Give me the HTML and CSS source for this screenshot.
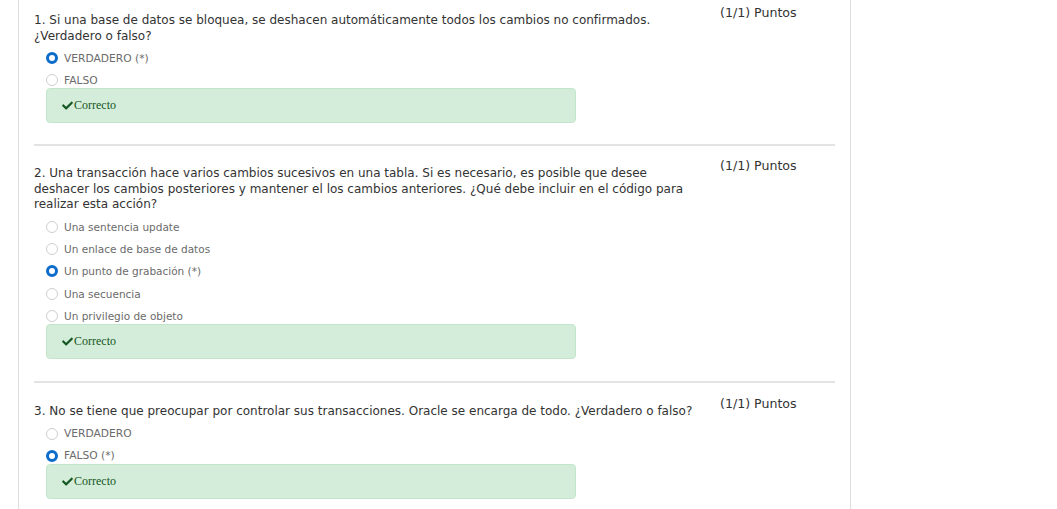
FILE: index.html
```html
<!DOCTYPE html>
<html lang="es">
<head>
<meta charset="utf-8">
<title>Quiz</title>
<link rel="stylesheet" href="styles.css">
</head>
<body>
<div class="quiz">
  <div class="question">
    <div class="q-body">
      <div class="q-text">1. Si una base de datos se bloquea, se deshacen automáticamente todos los cambios no confirmados. ¿Verdadero o falso?</div>
      <ul class="options">
        <li class="opt"><span class="radio checked"></span><span class="caps">VERDADERO (*)</span></li>
        <li class="opt"><span class="radio"></span><span class="caps">FALSO</span></li>
      </ul>
      <div class="feedback"><svg class="check" viewBox="0 40 512 420" width="11" height="9"><path d="M173.9 439.4l-166.4-166.4c-10-10-10-26.2 0-36.2l36.2-36.2c10-10 26.2-10 36.2 0L192 312.7 432.1 72.6c10-10 26.2-10 36.2 0l36.2 36.2c10 10 10 26.2 0 36.2l-294.4 294.4c-10 10-26.2 10-36.2 0z" fill="#155724"/></svg>Correcto</div>
    </div>
    <div class="points">(1/1) Puntos</div>
  </div>
  <div class="sep"></div>
  <div class="question">
    <div class="q-body">
      <div class="q-text">2. Una transacción hace varios cambios sucesivos en una tabla. Si es necesario, es posible que desee deshacer los cambios posteriores y mantener el los cambios anteriores. ¿Qué debe incluir en el código para realizar esta acción?</div>
      <ul class="options">
        <li class="opt"><span class="radio"></span><span>Una sentencia update</span></li>
        <li class="opt"><span class="radio"></span><span>Un enlace de base de datos</span></li>
        <li class="opt"><span class="radio checked"></span><span>Un punto de grabación (*)</span></li>
        <li class="opt"><span class="radio"></span><span>Una secuencia</span></li>
        <li class="opt"><span class="radio"></span><span>Un privilegio de objeto</span></li>
      </ul>
      <div class="feedback"><svg class="check" viewBox="0 40 512 420" width="11" height="9"><path d="M173.9 439.4l-166.4-166.4c-10-10-10-26.2 0-36.2l36.2-36.2c10-10 26.2-10 36.2 0L192 312.7 432.1 72.6c10-10 26.2-10 36.2 0l36.2 36.2c10 10 10 26.2 0 36.2l-294.4 294.4c-10 10-26.2 10-36.2 0z" fill="#155724"/></svg>Correcto</div>
    </div>
    <div class="points">(1/1) Puntos</div>
  </div>
  <div class="sep sep-last"></div>
  <div class="question">
    <div class="q-body">
      <div class="q-text">3. No se tiene que preocupar por controlar sus transacciones. Oracle se encarga de todo. ¿Verdadero o falso?</div>
      <ul class="options">
        <li class="opt"><span class="radio"></span><span class="caps">VERDADERO</span></li>
        <li class="opt"><span class="radio checked"></span><span class="caps">FALSO (*)</span></li>
      </ul>
      <div class="feedback"><svg class="check" viewBox="0 40 512 420" width="11" height="9"><path d="M173.9 439.4l-166.4-166.4c-10-10-10-26.2 0-36.2l36.2-36.2c10-10 26.2-10 36.2 0L192 312.7 432.1 72.6c10-10 26.2-10 36.2 0l36.2 36.2c10 10 10 26.2 0 36.2l-294.4 294.4c-10 10-26.2 10-36.2 0z" fill="#155724"/></svg>Correcto</div>
    </div>
    <div class="points">(1/1) Puntos</div>
  </div>
</div>
</body>
</html>
```

FILE: styles.css
```css
html, body {
  margin: 0;
  padding: 0;
  background: #ffffff;
}

body {
  font-family: "DejaVu Sans", Verdana, sans-serif;
  color: #333333;
}

.quiz {
  margin-left: 18px;
  width: 833px;
  min-height: 509px;
  box-sizing: border-box;
  border-left: 1px solid #dddddd;
  border-right: 1px solid #dddddd;
  padding: 5px 15px 30px 15px;
}

.question {
  display: flex;
  align-items: flex-start;
}

.q-body {
  width: 666px;
}

.q-text {
  margin-top: 8px;
  font-size: 12px;
  line-height: 15.5px;
  color: #333333;
}

.options {
  list-style: none;
  margin: 0;
  padding: 0 0 0 12px;
}

.opt {
  display: flex;
  align-items: center;
  height: 16px;
  margin-top: 6.2px;
  font-size: 10.5px;
  color: #6b6b6b;
}

.caps {
  font-size: 10.7px;
}

.radio {
  width: 12px;
  height: 12px;
  box-sizing: border-box;
  border-radius: 50%;
  border: 1px solid #cfcfcf;
  background: #ffffff;
  margin-right: 6px;
  flex: none;
}

.radio.checked {
  border: 3.5px solid #0b6ccc;
}

.feedback {
  margin-left: 12px;
  width: 530px;
  height: 35px;
  box-sizing: border-box;
  background: #d4edda;
  border: 1px solid #c3e6cb;
  border-radius: 4px;
  display: flex;
  align-items: center;
  padding-left: 15px;
  font-family: "Liberation Serif", "Times New Roman", serif;
  font-size: 12px;
  color: #155724;
}

.check {
  margin-right: 1px;
}

.points {
  margin-left: 20px;
  font-size: 12.6px;
  line-height: 16px;
  color: #333333;
  white-space: nowrap;
}

.sep {
  height: 2px;
  background: #e3e3e3;
  margin: 21px 0 12px 0;
}

.sep-last {
  margin-top: 22px;
  margin-bottom: 13px;
}
```
